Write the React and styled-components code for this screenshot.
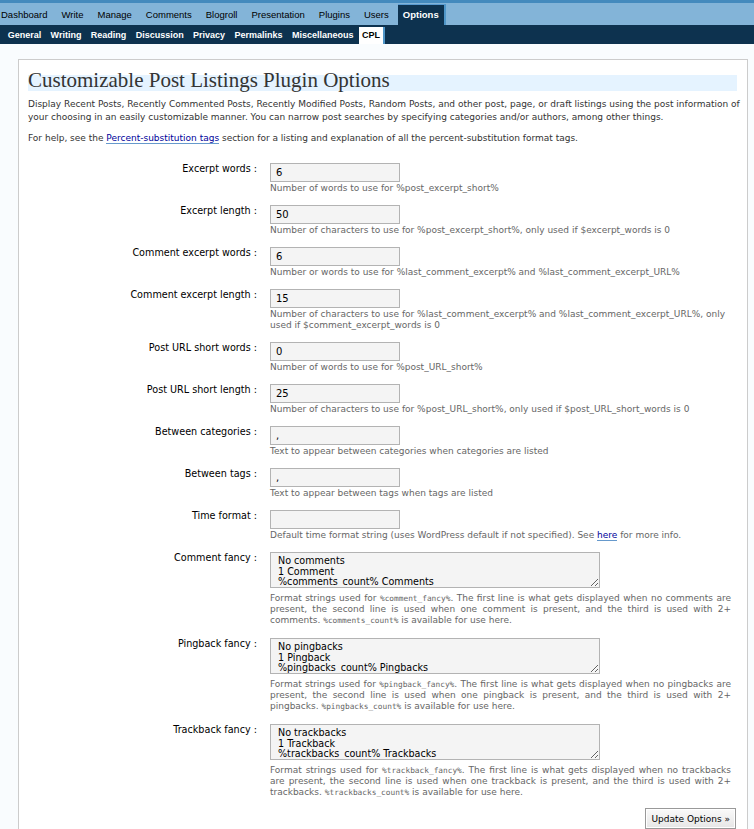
import React from "react";
import styled, { createGlobalStyle } from "styled-components";

const GlobalStyle = createGlobalStyle`
  html, body {
    margin: 0;
    padding: 0;
  }
  body {
    background: #f9fcfe;
    color: #000;
    font-family: "DejaVu Sans", "Liberation Sans", sans-serif;
    font-size: 9px;
  }
`;

const TopMenu = styled.ul`
  display: flex;
  align-items: flex-end;
  height: 22px;
  margin: 0;
  padding: 0;
  list-style: none;
  background: #83b4d8;
  border-top: 3px solid #448abd;
  font-family: "Liberation Sans", Arial, sans-serif;
`;

const TopItem = styled.li`
  box-sizing: border-box;
  height: 21px;
  line-height: 20px;
  margin: 0 2px 0 ${(p) => (p.first ? "-4px" : "0")};
  padding: 0 5px;
  font-size: 9.5px;
  color: ${(p) => (p.active ? "#fff" : "#000")};
  font-weight: ${(p) => (p.active ? "bold" : "normal")};
  background: ${(p) => (p.active ? "#0d324f" : "transparent")};
  border-top: 1px solid ${(p) => (p.active ? "#5a9bd0" : "transparent")};
  border-right: 2px solid ${(p) => (p.active ? "#4f96c8" : "transparent")};
`;

const SubMenu = styled.ul`
  display: flex;
  align-items: flex-end;
  height: 19px;
  margin: 0;
  padding: 0 0 0 4px;
  list-style: none;
  background: #0d324f;
  font-family: "Liberation Sans", Arial, sans-serif;
`;

const SubItem = styled.li`
  box-sizing: border-box;
  height: 17px;
  line-height: 17px;
  padding: 0 ${(p) => (p.active ? 3 : 3.7)}px;
  font-size: 9px;
  font-weight: bold;
  color: ${(p) => (p.active ? "#000" : "#fff")};
  background: ${(p) => (p.active ? "#fff" : "transparent")};
  border-right: 2px solid ${(p) => (p.active ? "#4f96c8" : "transparent")};
`;

const Page = styled.div`
  padding: 15px 6px 0 18px;
`;

const Wrap = styled.div`
  background: #fff;
  border: 1px solid #ccc;
  border-bottom: none;
  padding: 7px 5px 20px 9px;
`;

const Title = styled.h2`
  margin: 0 5px 0 0;
  height: 24px;
  line-height: 26px;
  font-family: "Liberation Serif", "DejaVu Serif", serif;
  font-size: 21px;
  font-weight: normal;
  color: #333;
  background: linear-gradient(to bottom, transparent 8px, #e5f3ff 8px);
`;

const Intro = styled.p`
  margin: ${(p) => (p.first ? "7px" : "8px")} 0 0;
  line-height: 13px;
  color: #333;
`;

const Link = styled.a`
  color: #00019b;
  text-decoration: none;
  border-bottom: 1px solid #69c;
`;

const Form = styled.form`
  margin-top: 18px;
`;

const Row = styled.div`
  display: grid;
  grid-template-columns: 229px 1fr;
  column-gap: 13px;
  padding-right: 13px;
  margin-bottom: ${(p) => p.gap}px;
`;

const Label = styled.label`
  text-align: right;
  font-size: 9.65px;
  line-height: 11px;
  color: #000;
`;

const TextInput = styled.input`
  display: block;
  box-sizing: border-box;
  width: 130px;
  height: 19px;
  margin: 0;
  padding: 0 5px;
  border: 1px solid #b3b3b3;
  background: #f4f4f4;
  font-family: "DejaVu Sans", sans-serif;
  font-size: 10px;
  color: #000;
  outline: none;
`;

const TextArea = styled.textarea`
  display: block;
  box-sizing: border-box;
  width: 330px;
  height: 36px;
  margin: 0;
  padding: 3px 7px 0;
  border: 1px solid #b3b3b3;
  background: #f4f4f4;
  font-family: "DejaVu Sans", sans-serif;
  font-size: 9.6px;
  line-height: 10.5px;
  color: #000;
  overflow: hidden;
  outline: none;
`;

const Desc = styled.div`
  margin: ${(p) => (p.area ? "5px -2px 0 0" : "1px 0 0")};
  font-size: 9px;
  line-height: 11px;
  color: #666;
  text-align: ${(p) => (p.area ? "justify" : "left")};
`;

const Code = styled.code`
  font-family: "DejaVu Sans Mono", "Liberation Mono", monospace;
  font-size: 7.8px;
  line-height: 1;
`;

const Submit = styled.div`
  display: flex;
  justify-content: flex-end;
  padding-right: 6px;
`;

const Button = styled.button`
  box-sizing: border-box;
  height: 21px;
  padding: 0 5px;
  border: 1px solid #999;
  box-shadow: inset 0 0 0 1px #fff;
  background: linear-gradient(#fafafa, #e6e6e6);
  font-family: "DejaVu Sans", sans-serif;
  font-size: 9px;
  color: #000;
`;

const topItems = ["Dashboard", "Write", "Manage", "Comments", "Blogroll", "Presentation", "Plugins", "Users", "Options"];
const subItems = ["General", "Writing", "Reading", "Discussion", "Privacy", "Permalinks", "Miscellaneous", "CPL"];

const fields = [
  { label: "Excerpt words", value: "6", desc: "Number of words to use for %post_excerpt_short%" },
  { label: "Excerpt length", value: "50", desc: "Number of characters to use for %post_excerpt_short%, only used if $excerpt_words is 0" },
  { label: "Comment excerpt words", value: "6", desc: "Number or words to use for %last_comment_excerpt% and %last_comment_excerpt_URL%" },
  {
    label: "Comment excerpt length",
    value: "15",
    desc: "Number of characters to use for %last_comment_excerpt% and %last_comment_excerpt_URL%, only used if $comment_excerpt_words is 0",
  },
  { label: "Post URL short words", value: "0", desc: "Number of words to use for %post_URL_short%" },
  { label: "Post URL short length", value: "25", desc: "Number of characters to use for %post_URL_short%, only used if $post_URL_short_words is 0" },
  { label: "Between categories", value: ",", desc: "Text to appear between categories when categories are listed" },
  { label: "Between tags", value: ",", desc: "Text to appear between tags when tags are listed" },
  {
    label: "Time format",
    value: "",
    desc: (
      <>
        Default time format string (uses WordPress default if not specified). See <Link href="#">here</Link> for more info.
      </>
    ),
  },
];

const fancy = [
  { label: "Comment fancy", key: "comment", one: "comment", many: "comments", title: "Comment", count: "comments_count" },
  { label: "Pingback fancy", key: "pingback", one: "pingback", many: "pingbacks", title: "Pingback", count: "pingbacks_count" },
  { label: "Trackback fancy", key: "trackback", one: "trackback", many: "trackbacks", title: "Trackback", count: "trackbacks_count" },
];

export default function App() {
  return (
    <>
      <GlobalStyle />
      <TopMenu>
        {topItems.map((t, i) => (
          <TopItem key={t} first={i === 0} active={t === "Options"}>
            {t}
          </TopItem>
        ))}
      </TopMenu>
      <SubMenu>
        {subItems.map((t) => (
          <SubItem key={t} active={t === "CPL"}>
            {t}
          </SubItem>
        ))}
      </SubMenu>
      <Page>
        <Wrap>
          <Title>Customizable Post Listings Plugin Options</Title>
          <Intro first>
            Display Recent Posts, Recently Commented Posts, Recently Modified Posts, Random Posts, and other post, page, or draft listings
            using the post information of your choosing in an easily customizable manner. You can narrow post searches by specifying
            categories and/or authors, among other things.
          </Intro>
          <Intro>
            For help, see the <Link href="#">Percent-substitution tags</Link> section for a listing and explanation of all the
            percent-substitution format tags.
          </Intro>
          <Form onSubmit={(e) => e.preventDefault()}>
            {fields.map((f) => (
              <Row key={f.label} gap={11}>
                <Label>{f.label} :</Label>
                <div>
                  <TextInput type="text" defaultValue={f.value} />
                  <Desc>{f.desc}</Desc>
                </div>
              </Row>
            ))}
            {fancy.map((f, i) => (
              <Row key={f.key} gap={i === fancy.length - 1 ? 10 : 12}>
                <Label>{f.label} :</Label>
                <div>
                  <TextArea defaultValue={`No ${f.many}\n1 ${f.title}\n%${f.count}% ${f.title}s`} />
                  <Desc area>
                    Format strings used for <Code>%{f.key}_fancy%</Code>. The first line is what gets displayed when no {f.many} are
                    present, the second line is used when one {f.one} is present, and the third is used with 2+ {f.many}.{" "}
                    <Code>%{f.count}%</Code> is available for use here.
                  </Desc>
                </div>
              </Row>
            ))}
            <Submit>
              <Button type="submit">Update Options »</Button>
            </Submit>
          </Form>
        </Wrap>
      </Page>
    </>
  );
}
